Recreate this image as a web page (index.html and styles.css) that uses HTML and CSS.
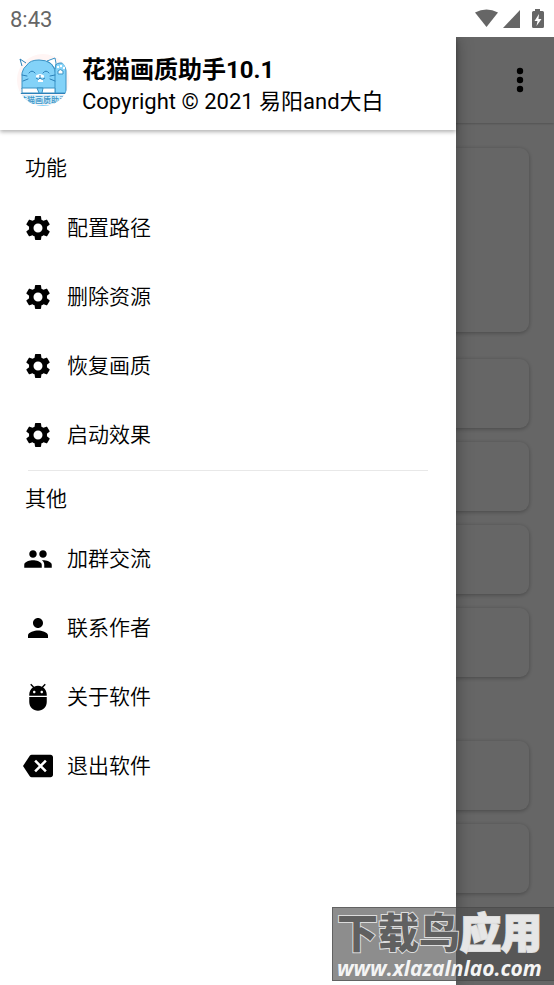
FILE: index.html
```html
<!DOCTYPE html>
<html lang="zh-CN">
<head>
<meta charset="utf-8">
<meta name="viewport" content="width=device-width, initial-scale=1">
<title>花猫画质助手</title>
<link rel="stylesheet" href="styles.css">
</head>
<body>
<svg class="defs" aria-hidden="true">
  <symbol id="gear" viewBox="0 0 24 24"><path d="M19.14 12.94c.04-.3.06-.61.06-.94s-.02-.64-.07-.94l2.03-1.58a.49.49 0 0 0 .12-.61l-1.92-3.32a.49.49 0 0 0-.59-.22l-2.39.96a7 7 0 0 0-1.62-.94l-.36-2.54a.48.48 0 0 0-.48-.41h-3.84a.47.47 0 0 0-.47.41l-.36 2.54c-.59.24-1.13.57-1.62.94l-2.39-.96a.48.48 0 0 0-.59.22L2.74 8.87a.47.47 0 0 0 .12.61l2.03 1.58a6 6 0 0 0 0 1.88l-2.03 1.58a.49.49 0 0 0-.12.61l1.92 3.32c.12.22.37.29.59.22l2.39-.96c.5.38 1.03.7 1.62.94l.36 2.54c.05.24.24.41.48.41h3.84c.24 0 .44-.17.47-.41l.36-2.54a7 7 0 0 0 1.62-.94l2.39.96c.22.08.47 0 .59-.22l1.92-3.32a.47.47 0 0 0-.12-.61zM12 15.6a3.6 3.6 0 1 1 0-7.2 3.6 3.6 0 0 1 0 7.2z"/></symbol>
</svg>

<div class="status">
  <span class="clock">8:43</span>
  <svg class="signals" viewBox="0 0 70 20" aria-hidden="true">
    <path d="M0 3.5Q11.500 -2.500 23 3.500L11.500 18z"/>
    <path d="M45 1v18H28z"/>
    <path fill-rule="evenodd" d="M60 0h5v2h2.500q1.500 0 1.500 1.500v14q0 1.500-1.500 1.500h-9q-1.500 0-1.500-1.500V3.500q0-1.500 1.500-1.500H60zM64 5l-4.500 7h3l-1 5 5-7h-3z"/>
  </svg>
</div>

<div class="stage">
  <main class="page">
    <div class="toolbar">
      <button class="more" aria-label="更多"><svg viewBox="0 0 8 26"><circle cx="4" cy="4" r="3.200"/><circle cx="4" cy="13" r="3.200"/><circle cx="4" cy="22" r="3.200"/></svg></button>
    </div>
    <div class="cards">
      <div class="card tall"></div>
      <div class="card"></div>
      <div class="card"></div>
      <div class="card"></div>
      <div class="card last"></div>
      <div class="card"></div>
      <div class="card"></div>
    </div>
  </main>
  <div class="scrim"></div>

  <aside class="drawer">
    <header class="brand">
      <svg class="logo" viewBox="0 0 54 54" aria-hidden="true">
        <clipPath id="disc"><circle cx="27" cy="27" r="26"/></clipPath>
        <circle cx="27" cy="27" r="26" fill="#fff5f4"/>
        <g clip-path="url(#disc)">
        <g fill="#83d2f8" stroke="#3b93c5" stroke-width="1" stroke-linejoin="round">
          <path d="M6 36V20Q7 15 11 12Q14 7 23 7Q30 7 34 10Q40 15 40 25V36z"/>
          <path d="M39 40V18Q38 10 44 10Q50 9 50 18V40z"/>
          <path d="M31 8L39 5Q41 10 39 16Q36 10 31 8z" fill="#fff"/>
          <path d="M6 35H39V40H6z" fill="#fff"/>
          <path d="M21 35h6l-1 5h-3z"/>
        </g>
        <g fill="none" stroke="#2c80b8" stroke-width="1" stroke-linecap="round">
          <path d="M13 20q3-4 6 0M27 20q3-4 6 0M11 23l-5-1M12 26l-5 2M34 23l5-1M34 26l5 2M4 40.500H51"/>
        </g>
        <path d="M20 22.500q4-3 8 0v2h-8zM22 26h5v3h-5z" fill="#fff"/>
        <path d="M24 22v3M20 25q3 3 4 0q2 3 5 0" fill="none" stroke="#2c80b8"/>
        <path d="M42 18q2-3 5 0v3h-5z" fill="#fff" stroke="#3b93c5"/>
        <circle cx="42" cy="14" r="1.200" fill="#fff"/><circle cx="45" cy="13" r="1.200" fill="#fff"/><circle cx="48" cy="15" r="1.200" fill="#fff"/>
        <path d="M4 42H50V51H4z" fill="#d5effc"/>
        <text class="logo-text" x="27" y="50" text-anchor="middle">花猫画质助手</text>
        <path d="M18 52.500H37" stroke="#83d2f8"/>
        </g>
        <path d="M6 13L4 6L10 10" fill="none" stroke="#2c80b8"/>
      </svg>
      <div class="brand-text">
        <h1 class="title">花猫画质助手10.1</h1>
        <p class="copyright">Copyright © 2021 易阳and大白</p>
      </div>
    </header>
    <nav class="menu">
      <section class="group">
        <h2 class="label">功能</h2>
        <a class="item" href="#path"><svg class="icon"><use href="#gear"/></svg>配置路径</a>
        <a class="item" href="#delete"><svg class="icon"><use href="#gear"/></svg>删除资源</a>
        <a class="item" href="#restore"><svg class="icon"><use href="#gear"/></svg>恢复画质</a>
        <a class="item" href="#start"><svg class="icon"><use href="#gear"/></svg>启动效果</a>
      </section>
      <section class="group">
        <h2 class="label">其他</h2>
        <a class="item" href="#group"><svg class="icon" viewBox="0 0 24 24"><path d="M16 11c1.660 0 2.990-1.340 2.990-3S17.660 5 16 5s-3 1.340-3 3 1.340 3 3 3zm-8 0c1.660 0 2.990-1.340 2.990-3S9.660 5 8 5 5 6.340 5 8s1.340 3 3 3zm0 2c-2.330 0-7 1.170-7 3.500V19h14v-2.500C15 14.170 10.330 13 8 13zm8 0c-.290 0-.620.020-.970.050 1.160.840 1.970 1.970 1.970 3.450V19h6v-2.500c0-2.330-4.670-3.500-7-3.500z"/></svg>加群交流</a>
        <a class="item" href="#author"><svg class="icon" viewBox="0 0 24 24"><path d="M12 12c2.210 0 4-1.790 4-4s-1.790-4-4-4-4 1.790-4 4 1.790 4 4 4zm0 2c-2.670 0-8 1.340-8 4v2h16v-2c0-2.660-5.330-4-8-4z"/></svg>联系作者</a>
        <a class="item" href="#about"><svg class="icon" viewBox="0 0 24 24"><path d="M5 16c0 3.870 3.130 7 7 7s7-3.130 7-7v-4H5v4zM16.120 4.370l2.100-2.100-.820-.830-2.300 2.310C14.160 3.280 13.120 3 12 3s-2.160.280-3.090.750L6.600 1.440l-.820.830 2.100 2.100C6.140 5.640 5 7.680 5 10v1h14v-1c0-2.320-1.140-4.360-2.880-5.630zM9 9c-.550 0-1-.450-1-1s.450-1 1-1 1 .450 1 1-.450 1-1 1zm6 0c-.550 0-1-.450-1-1s.450-1 1-1 1 .450 1 1-.450 1-1 1z"/></svg>关于软件</a>
        <a class="item" href="#exit"><svg class="icon" viewBox="0 0 24 24"><path fill-rule="evenodd" d="M22 3H7c-.690 0-1.230.350-1.590.880L0 12l5.410 8.110c.360.530.9.890 1.590.890h15c1.100 0 2-.9 2-2V5c0-1.100-.9-2-2-2zm-3 12.590L17.590 17 14 13.410 10.410 17 9 15.590 12.590 12 9 8.410 10.410 7 14 10.590 17.590 7 19 8.410 15.410 12 19 15.590z"/></svg>退出软件</a>
      </section>
    </nav>
  </aside>

  <div class="watermark">
    <div class="mark-name">下载鸟<span class="mark-light">应用</span></div>
    <div class="mark-site">www.xlazalnlao.com</div>
  </div>
</div>
</body>
</html>
```

FILE: styles.css
```css
* { box-sizing: border-box; }

body {
  margin: 0;
  min-height: 100vh;
  display: flex;
  flex-direction: column;
  background: #fff;
  color: #000;
  font-family: Roboto, "Noto Sans CJK SC", sans-serif;
}

h1, h2, p { margin: 0; }

.defs { display: none; }

.status {
  height: 37px;
  padding: 2px 9px 0 10px;
  display: flex;
  align-items: center;
  justify-content: space-between;
  color: #666;
}

.clock { font-size: 22px; }

.signals {
  width: 70px;
  height: 20px;
  margin-bottom: 2px;
  fill: #666;
}

.stage {
  position: relative;
  flex: 1;
  display: flex;
  flex-direction: column;
  overflow: hidden;
}

.page {
  flex: 1;
  background: #fff;
}

.toolbar {
  height: 86px;
  padding: 0 22px;
  display: flex;
  align-items: center;
  justify-content: flex-end;
  box-shadow: 0 1px 2px rgba(0, 0, 0, .2);
}

.more {
  border: 0;
  padding: 0;
  background: none;
}

.more svg {
  display: block;
  width: 24px;
  height: 26px;
}

.cards {
  padding: 25px 25px 0;
  display: flex;
  flex-direction: column;
  gap: 14px;
}

.card {
  height: 69px;
  border-radius: 9px;
  box-shadow: 0 1px 4px rgba(0, 0, 0, .3);
}

.tall {
  height: 184px;
  margin-bottom: 13px;
}

.last { margin-bottom: 50px; }

.scrim {
  position: absolute;
  inset: 0;
  background: rgba(0, 0, 0, .6);
}

.drawer {
  position: absolute;
  inset: 0 98px 0 0;
  background: #fff;
  box-shadow: 0 0 16px rgba(0, 0, 0, .35);
}

.brand {
  height: 93px;
  padding: 0 16px;
  display: flex;
  align-items: center;
  gap: 12px;
  box-shadow: 0 2px 4px rgba(0, 0, 0, .3);
}

.brand-text { padding-top: 4px; }

.logo {
  width: 54px;
  height: 54px;
  margin-bottom: 8px;
}

.logo-text {
  font-size: 8px;
  font-weight: 500;
  fill: #3b93c5;
}

.title {
  font-size: 24px;
  line-height: 32px;
  font-weight: 700;
}

.copyright {
  font-size: 22px;
  line-height: 32px;
}

.menu { padding-top: 10px; }

.label {
  padding: 2px 0 0 25px;
  font-size: 21px;
  line-height: 53px;
  font-weight: 350;
}

.group + .group::before {
  content: "";
  display: block;
  height: 1px;
  margin: -1px 28px 0;
  background: #e8e8e8;
}

.item {
  height: 69px;
  padding: 0 0 3px 23px;
  display: flex;
  align-items: center;
  gap: 14px;
  color: inherit;
  font-size: 21px;
  line-height: 30px;
  font-weight: 350;
  text-decoration: none;
}

.icon {
  width: 30px;
  height: 30px;
}

.watermark {
  position: absolute;
  right: 0;
  bottom: 4px;
  width: 222px;
  height: 74px;
  padding: 0 4px;
  border: 1px solid rgba(70, 70, 70, .6);
  border-right: 0;
  background: rgba(80, 80, 80, .65);
  white-space: nowrap;
}

.mark-name {
  font-size: 41px;
  line-height: 52px;
  font-weight: 900;
  color: #606060;
  -webkit-text-stroke: 2px #ddd;
  paint-order: stroke fill;
}

.mark-light { color: #e6e6e6; }

.mark-site {
  font-family: "Open Sans", sans-serif;
  font-size: 21px;
  line-height: 16px;
  font-weight: 700;
  font-style: italic;
  color: #f4f4f4;
}
```
